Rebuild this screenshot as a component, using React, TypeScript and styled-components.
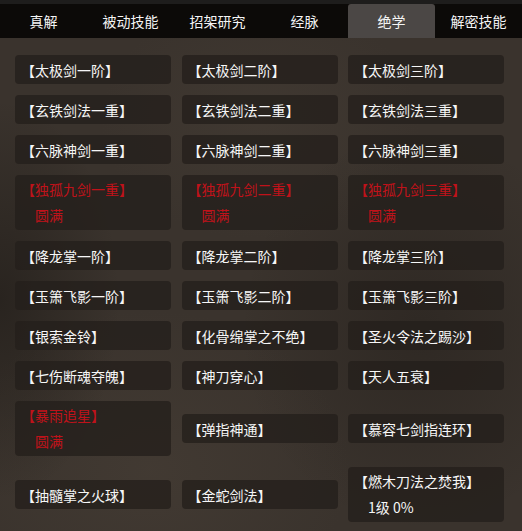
import styled, { createGlobalStyle } from "styled-components";

const GlobalStyle = createGlobalStyle`
  html, body {
    margin: 0;
    padding: 0;
    background: #38312b;
  }
  body {
    font-family: "Noto Sans CJK SC", "Microsoft YaHei", sans-serif;
  }
`;

type Skill = {
  name: string;
  done?: boolean;
  level?: string;
};

const tabs = ["真解", "被动技能", "招架研究", "经脉", "绝学", "解密技能"];
const activeTab = "绝学";

const skills: Skill[] = [
  { name: "【太极剑一阶】" },
  { name: "【太极剑二阶】" },
  { name: "【太极剑三阶】" },
  { name: "【玄铁剑法一重】" },
  { name: "【玄铁剑法二重】" },
  { name: "【玄铁剑法三重】" },
  { name: "【六脉神剑一重】" },
  { name: "【六脉神剑二重】" },
  { name: "【六脉神剑三重】" },
  { name: "【独孤九剑一重】", done: true },
  { name: "【独孤九剑二重】", done: true },
  { name: "【独孤九剑三重】", done: true },
  { name: "【降龙掌一阶】" },
  { name: "【降龙掌二阶】" },
  { name: "【降龙掌三阶】" },
  { name: "【玉箫飞影一阶】" },
  { name: "【玉箫飞影二阶】" },
  { name: "【玉箫飞影三阶】" },
  { name: "【银索金铃】" },
  { name: "【化骨绵掌之不绝】" },
  { name: "【圣火令法之踢沙】" },
  { name: "【七伤断魂夺魄】" },
  { name: "【神刀穿心】" },
  { name: "【天人五衰】" },
  { name: "【暴雨追星】", done: true },
  { name: "【弹指神通】" },
  { name: "【慕容七剑指连环】" },
  { name: "【抽髓掌之火球】" },
  { name: "【金蛇剑法】" },
  { name: "【燃木刀法之焚我】", level: "1级 0%" },
];

const App = () => {
  return (
    <Page>
      <GlobalStyle />
      <TabBar>
        {tabs.map((t) => (
          <Tab key={t} $active={t === activeTab}>
            {t}
          </Tab>
        ))}
      </TabBar>
      <Content>
        <Grid>
          {skills.map((s) => {
            const tall = s.done || !!s.level;
            return (
              <Card key={s.name} $tall={tall}>
                <Name $red={s.done}>{s.name}</Name>
                {s.done && <Sub $red>圆满</Sub>}
                {s.level && <Sub>{s.level}</Sub>}
              </Card>
            );
          })}
        </Grid>
      </Content>
    </Page>
  );
};

export default App;

const Page = styled.div`
  width: 522px;
  min-height: 531px;
  background:
    radial-gradient(ellipse 120px 200px at 0px 300px, rgba(20, 17, 14, 0.45), transparent),
    radial-gradient(ellipse 200px 160px at 150px 470px, rgba(80, 70, 60, 0.35), transparent),
    radial-gradient(ellipse 180px 200px at 420px 330px, rgba(25, 21, 18, 0.35), transparent),
    radial-gradient(ellipse 160px 120px at 260px 120px, rgba(75, 66, 57, 0.35), transparent),
    #3a332d;
  overflow: hidden;
`;

const TabBar = styled.div`
  display: grid;
  grid-template-columns: repeat(6, 87px);
  height: 34px;
  border-top: 4px solid #1e1d1c;
  background: #0c0a08;
`;

const Tab = styled.div<{ $active?: boolean }>`
  display: flex;
  align-items: center;
  justify-content: center;
  color: #f4f4f4;
  font-size: 14px;
  background: ${(p) => (p.$active ? "#4b4745" : "transparent")};
  border-radius: ${(p) => (p.$active ? "3px 3px 0 0" : "0")};
`;

const Content = styled.div`
  padding: 17px 18px 8px 15px;
`;

const Grid = styled.div`
  display: grid;
  grid-template-columns: repeat(3, 156px);
  column-gap: 10.5px;
  row-gap: 11px;
  align-items: center;
`;

const Card = styled.div<{ $tall?: boolean }>`
  box-sizing: border-box;
  height: ${(p) => (p.$tall ? "55px" : "29px")};
  padding: ${(p) => (p.$tall ? "4px 6px 5px" : "0 6px")};
  display: flex;
  flex-direction: column;
  justify-content: ${(p) => (p.$tall ? "space-between" : "center")};
  background: rgba(36, 31, 27, 0.8);
  border-radius: 4px;
`;

const Name = styled.div<{ $red?: boolean }>`
  font-size: 14px;
  line-height: 20px;
  color: ${(p) => (p.$red ? "#c0121a" : "#f6f6f6")};
  white-space: nowrap;
`;

const Sub = styled.div<{ $red?: boolean }>`
  font-size: 14px;
  line-height: 20px;
  padding-left: 14px;
  color: ${(p) => (p.$red ? "#c0121a" : "#f6f6f6")};
`;
